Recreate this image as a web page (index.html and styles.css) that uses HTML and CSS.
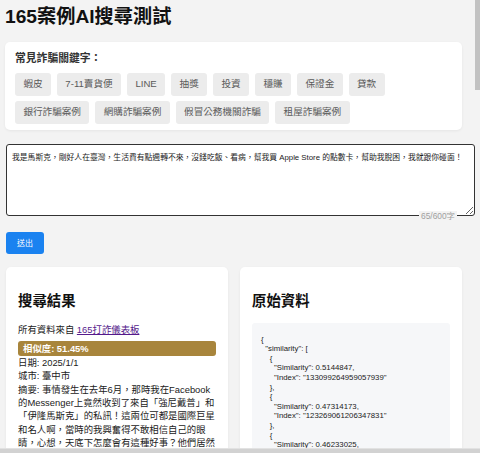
FILE: index.html
```html
<!DOCTYPE html>
<html lang="zh-Hant">
<head>
<meta charset="utf-8">
<title>165案例AI搜尋測試</title>
<link rel="stylesheet" href="styles.css">
</head>
<body>
<div class="page">
  <h1 class="title">165案例AI搜尋測試</h1>

  <section class="card keywords">
    <h3 class="kw-title">常見詐騙關鍵字：</h3>
    <div class="tags">
      <span class="tag">蝦皮</span>
      <span class="tag">7-11賣貨便</span>
      <span class="tag">LINE</span>
      <span class="tag">抽獎</span>
      <span class="tag">投資</span>
      <span class="tag">穩賺</span>
      <span class="tag">保證金</span>
      <span class="tag">貸款</span>
      <span class="tag">銀行詐騙案例</span>
      <span class="tag">網購詐騙案例</span>
      <span class="tag">假冒公務機關詐騙</span>
      <span class="tag">租屋詐騙案例</span>
    </div>
  </section>

  <div class="input-wrap">
    <textarea class="query">我是馬斯克，剛好人在臺灣，生活費有點週轉不來，沒錢吃飯、看病，幫我買 Apple Store 的點數卡，幫助我脫困，我就跟你碰面！</textarea>
    <span class="count">65/600字</span>
  </div>

  <button class="submit" type="button">送出</button>

  <div class="results">
    <section class="card result">
      <h2 class="card-title">搜尋結果</h2>
      <p class="source">所有資料來自 <a class="src-link" href="#">165打詐儀表板</a></p>
      <div class="sim">相似度: 51.45%</div>
      <div class="case">
        <div>日期: 2025/1/1</div>
        <div>城市: 臺中市</div>
        <div>摘要: 事情發生在去年6月，那時我在Facebook的Messenger上竟然收到了來自「強尼戴普」和「伊隆馬斯克」的私訊！這兩位可都是國際巨星和名人啊，當時的我興奮得不敢相信自己的眼睛，心想，天底下怎麼會有這種好事？他們居然主動傳訊息給我，還說想跟我交朋友，之後更表示要寄送禮物給我，只要先支付運費與關稅就可以收到。</div>
      </div>
    </section>

    <section class="card raw">
      <h2 class="card-title">原始資料</h2>
<pre class="json">{
  "similarity": [
    {
      "Similarity": 0.5144847,
      "Index": "133099264959057939"
    },
    {
      "Similarity": 0.47314173,
      "Index": "123269061206347831"
    },
    {
      "Similarity": 0.46233025,
      "Index": "131270058604916820"
    },
    {
      "Similarity": 0.45810297,
      "Index": "128836104477218902"
    }
  ]
}</pre>
    </section>
  </div>
</div>

<div class="vscroll" aria-hidden="true"><div class="vthumb"></div></div>
<div class="hscroll" aria-hidden="true"></div>
</body>
</html>
```

FILE: styles.css
```css
html, body {
  margin: 0;
  padding: 0;
}

body {
  background: #f3f3f3;
  color: #1f1f1f;
  font-family: "Liberation Sans", "Noto Sans CJK TC", sans-serif;
}

.page {
  padding: 3px 5px 40px 5px;
}

.title {
  margin: 0;
  font-size: 19.2px;
  line-height: 28px;
  font-weight: 700;
  color: #111;
}

.card {
  background: #fff;
  border-radius: 5px;
  box-shadow: 0 1px 3px rgba(0, 0, 0, 0.06);
}

.keywords {
  margin-top: 11px;
  width: 457px;
  box-sizing: border-box;
  padding: 9px 10px 6px 10px;
}

.kw-title {
  margin: 0 0 7px 0;
  font-size: 10.8px;
  line-height: 15px;
  font-weight: 700;
  color: #333;
}

.tags {
  display: flex;
  flex-wrap: wrap;
  gap: 5.5px 6px;
}

.tag {
  display: inline-block;
  background: #ececec;
  color: #5a5a5a;
  font-size: 9.6px;
  line-height: 12px;
  padding: 5.3px 8.4px;
  border-radius: 3px;
}

.input-wrap {
  position: relative;
  margin-top: 14px;
  width: 469px;
  margin-left: 1px;
}

.query {
  display: block;
  box-sizing: border-box;
  width: 469px;
  height: 72px;
  margin: 0;
  padding: 8px 5px;
  border: 1px solid #333;
  border-radius: 3px;
  background: #fff;
  color: #222;
  font-family: "Liberation Sans", "Noto Sans CJK TC", sans-serif;
  font-size: 7.8px;
  line-height: 9.5px;
  resize: vertical;
}

.count {
  position: absolute;
  right: 18px;
  bottom: -5px;
  padding: 0 2px;
  background: #f3f3f3;
  color: #a0a0a0;
  font-size: 8.4px;
  line-height: 10px;
}

.submit {
  display: block;
  margin: 16px 0 0 1px;
  width: 38px;
  height: 22px;
  padding: 0;
  border: none;
  border-radius: 3px;
  background: #1a82f0;
  color: #fff;
  font-family: "Liberation Sans", "Noto Sans CJK TC", sans-serif;
  font-size: 8px;
}

.results {
  display: grid;
  grid-template-columns: 222px 222px;
  gap: 12px;
  margin: 13px 0 0 1px;
}

.result, .raw {
  padding: 12px;
}

.card-title {
  margin: 12px 0 11px 0;
  font-size: 14.4px;
  line-height: 21px;
  font-weight: 700;
  color: #111;
}

.source {
  margin: 0 0 5px 0;
  font-size: 9.4px;
  line-height: 13.3px;
  color: #222;
}

.src-link {
  color: #551a8b;
}

.sim {
  background: #a8853c;
  color: #fff;
  font-weight: 700;
  font-size: 9.4px;
  line-height: 15px;
  padding: 0 5px;
  border-radius: 3px;
}

.case {
  font-size: 9.4px;
  line-height: 13.33px;
  color: #222;
}

.json {
  margin: 0;
  background: #f6f7f9;
  padding: 12px 9px;
  border-radius: 3px;
  font-family: "Liberation Sans", "Noto Sans CJK TC", sans-serif;
  font-size: 7.8px;
  line-height: 9.6px;
  color: #222;
}

/* browser scrollbars visible in the capture */
.vscroll {
  position: fixed;
  top: 0;
  right: 0;
  width: 5px;
  height: 449px;
}

.vthumb {
  height: 90px;
  background: #c2c2c2;
}

.hscroll {
  position: fixed;
  left: 0;
  right: 0;
  bottom: 0;
  height: 4px;
  background: #d2d2d2;
  border-top: 1px solid #e2e2e2;
}
```
